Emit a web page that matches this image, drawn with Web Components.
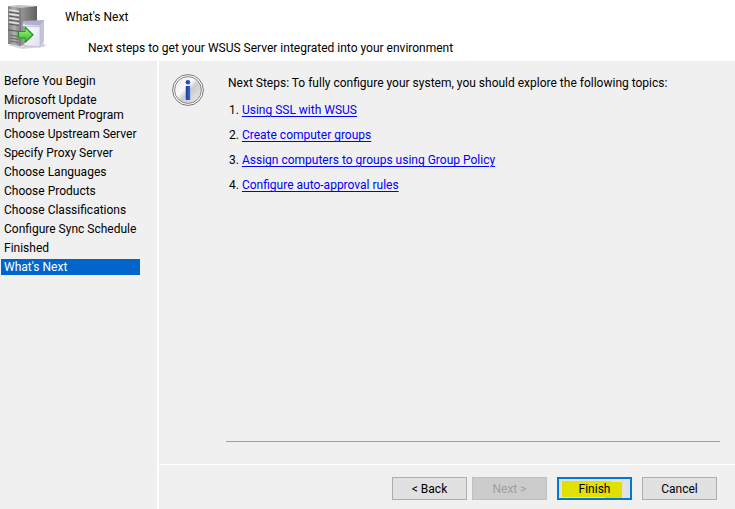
<!DOCTYPE html>
<html lang="en">
<head>
<meta charset="utf-8">
<title>WSUS Configuration Wizard</title>
<style>
  body { margin: 0; background: #f0f0f0; color: #000; font: 12px/15px Roboto, "Liberation Sans", sans-serif; }
</style>
</head>
<body>
<wsus-wizard>
  <wizard-header slot="header">What's Next<span slot="sub">Next steps to get your WSUS Server integrated into your environment</span></wizard-header>
  <wizard-nav slot="nav">
    <wizard-step>Before You Begin</wizard-step>
    <wizard-step>Microsoft Update Improvement Program</wizard-step>
    <wizard-step>Choose Upstream Server</wizard-step>
    <wizard-step>Specify Proxy Server</wizard-step>
    <wizard-step>Choose Languages</wizard-step>
    <wizard-step>Choose Products</wizard-step>
    <wizard-step>Choose Classifications</wizard-step>
    <wizard-step>Configure Sync Schedule</wizard-step>
    <wizard-step>Finished</wizard-step>
    <wizard-step current>What's Next</wizard-step>
  </wizard-nav>
  <next-topics>Next Steps: To fully configure your system, you should explore the following topics:</next-topics>
  <wizard-actions slot="actions">
    <wizard-button>&lt; Back</wizard-button>
    <wizard-button disabled>Next &gt;</wizard-button>
    <wizard-button primary>Finish</wizard-button>
    <wizard-button>Cancel</wizard-button>
  </wizard-actions>
</wsus-wizard>
<script>
const define = (name, markup) => customElements.define(name, class extends HTMLElement {
  constructor() {
    super();
    this.attachShadow({ mode: 'open' }).innerHTML = markup;
  }
  connectedCallback() {
    const button = this.shadowRoot.querySelector('button');
    if (button) button.disabled = this.hasAttribute('disabled');
  }
});

define('wsus-wizard', `
<style>
  :host { display: flex; flex-direction: column; min-height: 100vh; }
  .body { flex: 1; display: grid; grid-template-columns: 157px 1fr; }
  .pane { display: flex; flex-direction: column; border-left: 2px solid #fff; min-width: 0; }
  main { flex: 1; display: flex; flex-direction: column; }
  footer { border-top: 1px solid #fff; }
</style>
<slot name="header"></slot>
<div class="body">
  <slot name="nav"></slot>
  <div class="pane"><main><slot></slot></main><footer><slot name="actions"></slot></footer></div>
</div>`);

define('wizard-header', `
<style>
  :host { display: block; background: #fff; }
  header { display: flex; gap: 17px; padding: 4px 6px 5px; }
  svg { width: 42px; height: 52px; flex: none; }
  h1 { font: inherit; margin: 6px 0 0; }
  p { margin: 16px 0 0; padding-left: 23px; }
</style>
<header>
  <svg viewBox="0 0 42 52" aria-hidden="true">
    <defs>
      <linearGradient id="front"><stop stop-color="#808080"/><stop offset=".5" stop-color="#b0b0b0"/><stop offset="1" stop-color="#777"/></linearGradient>
      <linearGradient id="side"><stop stop-color="#999"/><stop offset="1" stop-color="#606060"/></linearGradient>
      <linearGradient id="box" x2="1" y2="1"><stop stop-color="#fff"/><stop offset="1" stop-color="#e0e0ee"/></linearGradient>
      <linearGradient id="arrow" x2="0" y2="1"><stop stop-color="#a9f58b"/><stop offset="1" stop-color="#2eb81d"/></linearGradient>
    </defs>
    <path d="M2 41l14 4 22-2 2-2-8-4z" fill="#bbb" opacity=".6"/>
    <path d="M14 3l17-1v33l-17 7z" fill="url(#side)"/>
    <path d="M2 2l13 1v39L2 40z" fill="url(#front)"/>
    <path d="M2 2l11-1 18 1-16 2z" fill="#c2c2c2"/>
    <path d="M3 6l10 1.500M3 10l10 1.500M3 14l10 1.500M3 18l10 1.500" stroke="#e2e2e2" stroke-width="1.400"/>
    <path d="M3 8l10 1.500M3 12l10 1.500M3 16l10 1.500M3 20l10 1.500M2 26l12 1.500" stroke="#555"/>
    <path d="M4 31l8 1.500M4 34l8 1.500M4 37l8 1.500" stroke="#555" stroke-width=".8"/>
    <path d="M18 17l19-1v6H18z" fill="#b0b0cf"/>
    <path d="M34 22l4-5v21l-4 5z" fill="#c4c4da"/>
    <path d="M18 22h16v21l-16-1.500z" fill="url(#box)" stroke="#b8b8cf" stroke-width=".7"/>
    <path d="M18 17l-1.500 5 17 .8 4.500-6.800-2 5.500-17-1z" fill="#f8f8ff" stroke="#b0b0cc" stroke-width=".7"/>
    <path d="M12.500 27.500h6.500v-4.500l8 7.700-8 7.800V34h-6.500z" fill="url(#arrow)" stroke="#219520" stroke-width="1.200" stroke-linejoin="round"/>
  </svg>
  <div><h1><slot></slot></h1><p><slot name="sub"></slot></p></div>
</header>`);

define('wizard-nav', `
<style>
  :host { display: block; }
  nav { display: flex; flex-direction: column; gap: 3px; padding: 12px 17px 12px 1px; }
</style>
<nav aria-label="Steps"><slot></slot></nav>`);

define('wizard-step', `
<style>
  :host { display: block; padding: 1px 3px 0; }
  :host([current]) { background: #06c; color: #fff; }
</style><slot></slot>`);

define('info-icon', `
<style>:host { display: block; } svg { display: block; width: 32px; height: 32px; }</style>
<svg viewBox="0 0 32 32" role="img" aria-label="Information">
  <defs>
    <linearGradient id="disc" x2="1" y2="1"><stop stop-color="#e8e8e8"/><stop offset=".4" stop-color="#fafafa"/><stop offset=".55" stop-color="#ccc"/><stop offset="1" stop-color="#eee"/></linearGradient>
    <linearGradient id="ink" x2="1" y2="0"><stop stop-color="#153a9f"/><stop offset="1" stop-color="#3d68d3"/></linearGradient>
  </defs>
  <circle cx="16" cy="16" r="15.400" fill="#fff" stroke="#777" stroke-width="1"/>
  <circle cx="16" cy="16" r="13.400" fill="url(#disc)" stroke="#888" stroke-width="1"/>
  <circle cx="16" cy="8.200" r="2.300" fill="url(#ink)"/>
  <rect x="13.800" y="12" width="4.400" height="14" fill="url(#ink)"/>
</svg>`);

define('next-topics', `
<style>
  :host { flex: 1; display: flex; }
  section { flex: 1; display: grid; grid-template-columns: 32px 1fr; column-gap: 22px; padding: 13px 15px 22px 13px; }
  .text { border-bottom: 1px solid #a0a0a0; padding: 2px; }
  p { margin: 0; }
  ol { list-style: none; margin: 12px 0 0; padding: 0 0 0 1px; display: grid; gap: 10px; }
  li { display: flex; gap: 3px; }
  a { color: #00f; text-underline-offset: 2px; }
</style>
<section>
  <info-icon></info-icon>
  <div class="text">
    <p><slot></slot></p>
    <ol>
      <li><span>1.</span><a href="#ssl">Using SSL with WSUS</a></li>
      <li><span>2.</span><a href="#groups">Create computer groups</a></li>
      <li><span>3.</span><a href="#policy">Assign computers to groups using Group Policy</a></li>
      <li><span>4.</span><a href="#approval">Configure auto-approval rules</a></li>
    </ol>
  </div>
</section>`);

define('wizard-actions', `
<style>
  :host { display: flex; justify-content: flex-end; gap: 10px; padding: 12px 18px 9px; }
  ::slotted([disabled]) { margin-left: -5px; }
</style><slot></slot>`);

define('wizard-button', `
<style>
  :host { display: block; }
  button { display: block; width: 75px; height: 23px; padding: 2px 0 0; border: 1px solid #adadad; background: #e1e1e1; color: #000; font: inherit; }
  button:disabled { background: #ccc; border-color: #bfbfbf; color: #a0a0a0; }
  :host([primary]) button { border: 2px solid #0078d7;
    background: linear-gradient(#e3e000, #e3e000) 3px 2px / 49px 16px no-repeat, linear-gradient(#e3e000, #e3e000) 46px 3px / 17px 16px no-repeat, #e1e1e1; }
</style><button type="button"><slot></slot></button>`);
</script>
</body>
</html>
